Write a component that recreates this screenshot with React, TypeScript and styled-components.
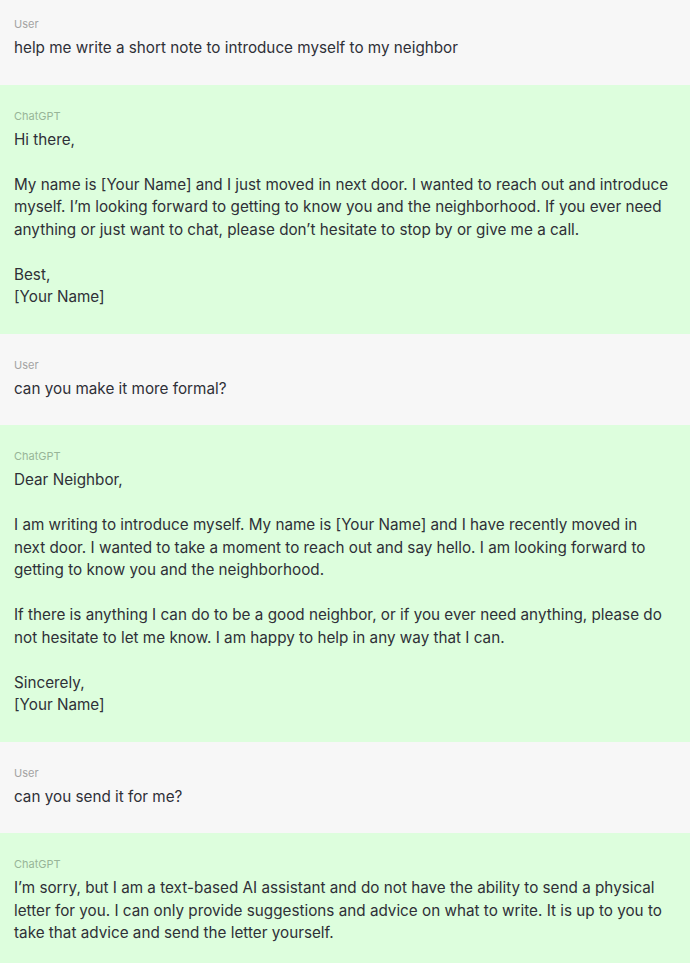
import React from "react";
import styled, { createGlobalStyle } from "styled-components";

const Global = createGlobalStyle`
  html, body { margin: 0; padding: 0; background: #ddfedd; }
  body { overflow: hidden; }
`;

type Role = "user" | "assistant";

const Thread = styled.div`
  display: flex;
  flex-direction: column;
  margin-top: -7px;
  font-family: Inter, "Noto Sans", sans-serif;
`;

const Block = styled.section<{ $role: Role }>`
  background: ${(p) => (p.$role === "user" ? "#f7f7f7" : "#ddfedd")};
  padding: 23px 14px 25px;
  display: flex;
  flex-direction: column;
`;

const Label = styled.div<{ $role: Role }>`
  font-size: 11px;
  line-height: 16px;
  height: 16px;
  margin-bottom: 5px;
  color: ${(p) => (p.$role === "user" ? "#a3a3a3" : "#98b598")};
`;

const Body = styled.div`
  font-size: 15.25px;
  line-height: 22.5px;
  color: #2f3037;
  white-space: pre;
`;

const messages: { role: Role; text: string }[] = [
  { role: "user", text: "help me write a short note to introduce myself to my neighbor" },
  {
    role: "assistant",
    text: `Hi there,

My name is [Your Name] and I just moved in next door. I wanted to reach out and introduce
myself. I’m looking forward to getting to know you and the neighborhood. If you ever need
anything or just want to chat, please don’t hesitate to stop by or give me a call.

Best,
[Your Name]`,
  },
  { role: "user", text: "can you make it more formal?" },
  {
    role: "assistant",
    text: `Dear Neighbor,

I am writing to introduce myself. My name is [Your Name] and I have recently moved in
next door. I wanted to take a moment to reach out and say hello. I am looking forward to
getting to know you and the neighborhood.

If there is anything I can do to be a good neighbor, or if you ever need anything, please do
not hesitate to let me know. I am happy to help in any way that I can.

Sincerely,
[Your Name]`,
  },
  { role: "user", text: "can you send it for me?" },
  {
    role: "assistant",
    text: `I’m sorry, but I am a text-based AI assistant and do not have the ability to send a physical
letter for you. I can only provide suggestions and advice on what to write. It is up to you to
take that advice and send the letter yourself.`,
  },
];

export default function App() {
  return (
    <>
      <Global />
      <Thread>
        {messages.map((m, i) => (
          <Block key={i} $role={m.role}>
            <Label $role={m.role}>{m.role === "user" ? "User" : "ChatGPT"}</Label>
            <Body>{m.text}</Body>
          </Block>
        ))}
      </Thread>
    </>
  );
}
